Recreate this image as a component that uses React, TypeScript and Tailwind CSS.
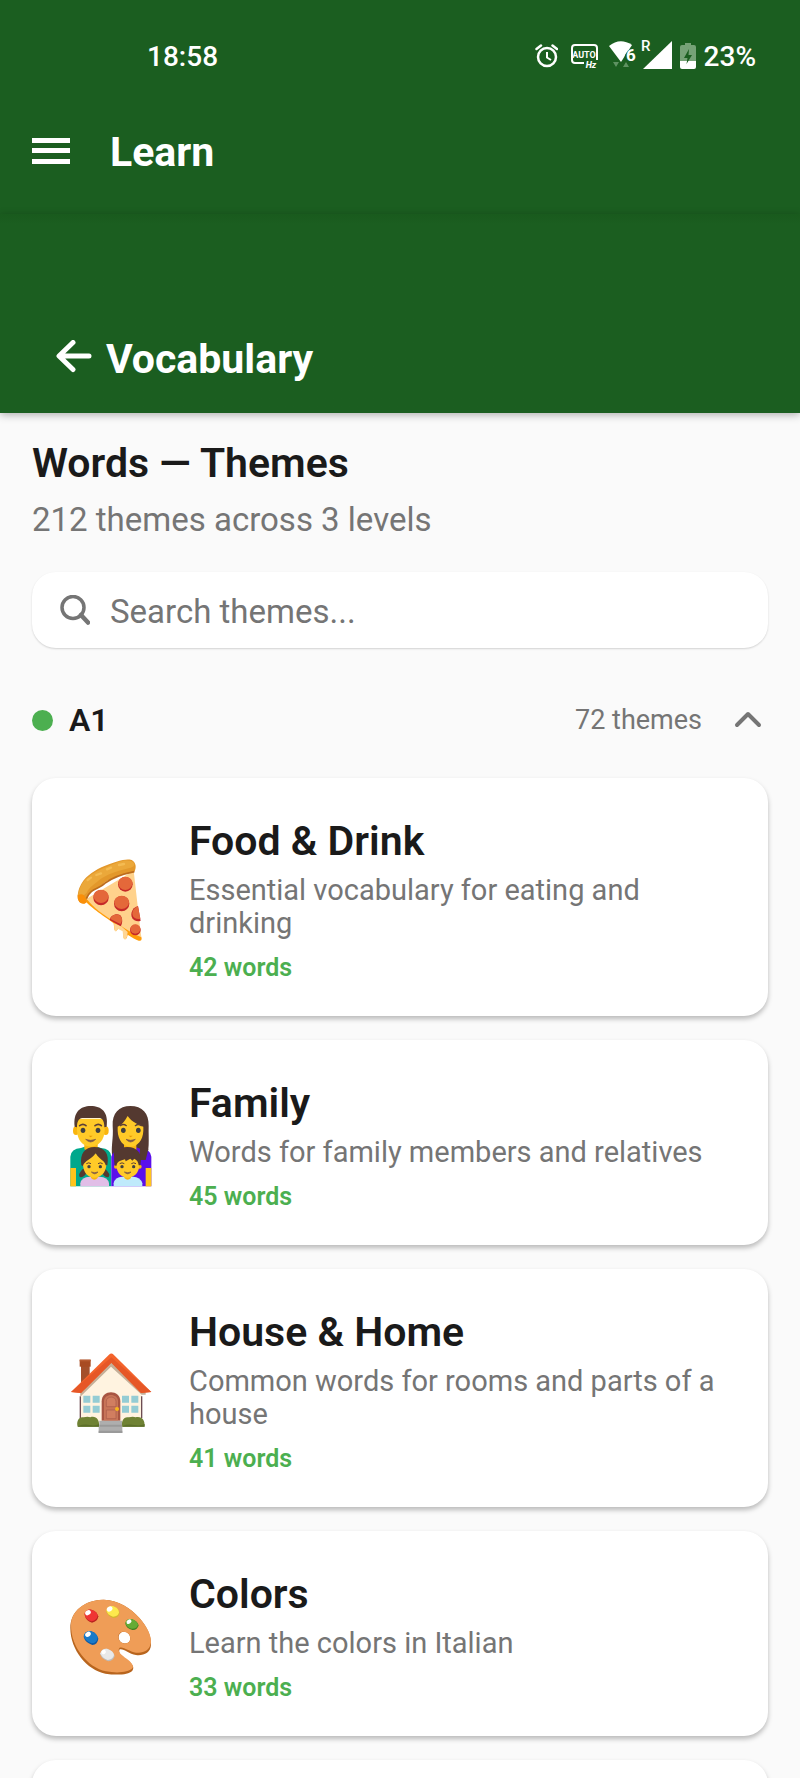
import React from 'react';

type Theme = {
  title: string;
  description: string;
  words: number;
  icon: React.ReactNode;
};

const PizzaIcon = () => (
  <svg viewBox="44 33 276 276" className="size-[92px]" aria-hidden="true">
    <path d="M103 180 C160 228 225 268 270 298 Q276 300 272 285 L250 92 Z" fill="#FFD28C" />
    <path d="M100 178 C112 196 160 228 190 250 L192 268 Q196 278 202 268 L203 262 L218 272 L220 294 Q225 302 230 292 L232 284 C246 292 256 299 265 302 Q276 305 273 292 C240 278 220 262 188 243 C160 224 128 203 112 180 Z" fill="#FF9D0A" />
    <path d="M191 250 L192 270 Q197 280 202 266 L217 274 L219 294 Q225 304 230 290 L232 276 L212 258 Z" fill="#FFD694" />
    <path d="M82 165 C80 184 92 194 104 190 C112 187 108 178 113 168 C125 146 150 145 160 130 C186 112 220 100 251 97 C260 84 257 66 244 60 C222 55 196 66 176 73 C144 84 119 99 100 121 Q84 143 82 165 Z" fill="#E3982B" />
    <path d="M84 165 C86 146 95 127 111 113 C136 91 178 78 204 66 C222 60 242 59 251 69 C255 82 241 83 226 87 C196 94 167 104 144 122 C130 134 119 139 109 158 Q100 170 84 165 Z" fill="#EBA83A" />
    <path d="M82 166 Q81 192 102 191 Q112 188 106 176 Q100 156 82 166 Z" fill="#FA8F08" />
    <path d="M108 176 C122 142 147 148 163 130 C187 112 222 101 252 95" fill="none" stroke="#BD6C1C" strokeWidth="5" />
    <path d="M112 120 l10 -7 M138 105 l14 -5 M170 88 l12 -5 M206 75 l15 -3" stroke="#F4BB52" strokeWidth="7" strokeLinecap="round" />
    <g fill="#C62828">
      <circle cx="225" cy="133" r="22" />
      <circle cx="152" cy="173" r="23" />
      <circle cx="214" cy="191" r="23" />
      <circle cx="255" cy="270" r="16" />
      <path d="M178 240 C180 226 198 219 209 225 C217 232 218 248 211 259 Z" />
      <path d="M263 198 C243 203 236 229 251 240 Q262 246 271 242 Z" />
    </g>
    <g fill="#E4683A">
      <ellipse cx="225" cy="130" rx="21" ry="20" />
      <ellipse cx="152" cy="169" rx="22" ry="20" />
      <ellipse cx="214" cy="187" rx="22" ry="20" />
      <ellipse cx="255" cy="267" rx="15" ry="14" />
      <path d="M180 237 C182 226 198 220 208 226 C217 233 217 244 210 252 Z" />
      <path d="M263 199 C246 205 240 225 253 234 Q262 239 270 236 Z" />
    </g>
  </svg>
);

const FamilyIcon = () => (
  <svg viewBox="44 33 276 276" className="size-[92px]" aria-hidden="true">
    {/* father */}
    <path d="M60 301 V212 Q62 188 92 186 L120 176 L152 186 Q181 188 183 212 V301 Z" fill="#00A88C" />
    <path d="M60 246 H77 V301 H60 Z" fill="#FFC41C" />
    <path d="M102 160 H142 V190 Q122 202 102 190 Z" fill="#F9B50F" />
    <ellipse cx="77" cy="134" rx="9" ry="13" fill="#F9B50F" />
    <ellipse cx="166" cy="134" rx="9" ry="13" fill="#F9B50F" />
    <path d="M80 98 H163 V132 C163 162 144 182 121 182 C98 182 80 162 80 132 Z" fill="#FFCA28" />
    <path d="M73 122 C68 78 90 60 121 60 C154 60 175 78 169 122 L162 124 C162 108 158 98 148 96 H96 C84 98 80 108 80 124 Z" fill="#543930" />
    <ellipse cx="98" cy="133" rx="7" ry="8" fill="#404040" />
    <ellipse cx="143" cy="133" rx="7" ry="8" fill="#404040" />
    <path d="M88 119 Q98 111 107 119 M134 119 Q144 111 153 119" fill="none" stroke="#5D4037" strokeWidth="5" strokeLinecap="round" />
    <path d="M115 149 H127 L121 154 Z" fill="#E59600" />
    <path d="M106 160 Q121 166 136 160 Q121 176 106 160 Z" fill="#795548" stroke="#795548" strokeWidth="2" />

    {/* mother */}
    <path d="M186 212 C181 180 190 160 187 120 C185 82 206 60 240 60 C276 60 296 82 295 120 C294 160 300 200 283 220 H196 Z" fill="#543930" />
    <path d="M183 301 V212 Q190 190 210 188 L240 178 L270 188 Q301 188 303 212 V301 Z" fill="#5B0FEB" />
    <path d="M286 246 H303 V301 H286 Z" fill="#FFC41C" />
    <path d="M187 185 L210 178 L208 224 H194 Z M270 180 L294 190 L286 222 H266 Z" fill="#543930" />
    <path d="M221 160 H258 V192 Q239 202 221 190 Z" fill="#F9B50F" />
    <path d="M202 122 C218 116 226 100 232 90 C244 108 264 116 279 122 V134 C278 164 260 182 240 182 C220 182 203 163 202 134 Z" fill="#FFCA28" />
    <ellipse cx="219" cy="133" rx="7" ry="8" fill="#404040" />
    <ellipse cx="264" cy="133" rx="7" ry="8" fill="#404040" />
    <path d="M210 119 Q219 112 228 119 M255 119 Q264 112 273 119" fill="none" stroke="#5D4037" strokeWidth="4" strokeLinecap="round" />
    <path d="M235 149 H247 L241 154 Z" fill="#E59600" />
    <path d="M227 160 Q241 166 255 160 Q241 176 227 160 Z" fill="#795548" stroke="#795548" strokeWidth="2" />

    {/* daughter */}
    <path d="M98 248 Q82 264 88 273 Q104 276 110 256 Z M164 248 Q182 264 175 273 Q160 276 154 256 Z" fill="#543930" />
    <path d="M90 301 V292 Q94 272 118 272 H148 Q172 272 176 292 V301 Z" fill="#E1BEE7" />
    <path d="M122 262 H142 V276 Q132 286 122 276 Z" fill="#F9B50F" />
    <path d="M98 225 C100 194 166 194 168 225 V238 C166 262 150 275 132 275 C114 275 100 262 98 238 Z" fill="#FFCA28" />
    <path d="M93 238 C88 202 104 183 132 183 C162 183 178 202 171 238 H166 C164 224 150 224 136 202 C122 222 102 224 98 240 Z" fill="#543930" />
    <circle cx="116" cy="242" r="5" fill="#404040" />
    <circle cx="150" cy="242" r="5" fill="#404040" />
    <path d="M108 233 Q115 228 122 233 M143 233 Q150 228 157 233" fill="none" stroke="#5D4037" strokeWidth="3" />
    <path d="M123 258 Q133 262 143 258 Q133 269 123 258 Z" fill="#795548" stroke="#795548" strokeWidth="2" />

    {/* son */}
    <path d="M190 301 V292 Q194 272 216 272 H248 Q270 272 276 292 V301 Z" fill="#BFEAFB" />
    <path d="M222 262 H242 V276 Q232 286 222 276 Z" fill="#F9B50F" />
    <circle cx="197" cy="242" r="6" fill="#F9B50F" />
    <circle cx="268" cy="242" r="6" fill="#F9B50F" />
    <path d="M198 214 H267 V238 C266 262 250 275 232 275 C214 275 199 262 198 238 Z" fill="#FFCA28" />
    <path d="M193 238 C186 202 203 183 231 183 C262 183 277 202 270 238 L265 238 C264 228 260 222 252 218 L246 224 L240 218 L226 226 L224 220 C210 224 201 226 198 240 Z" fill="#543930" />
    <circle cx="215" cy="242" r="5" fill="#404040" />
    <circle cx="250" cy="242" r="5" fill="#404040" />
    <path d="M208 233 Q215 228 222 233 M243 233 Q250 228 257 233" fill="none" stroke="#5D4037" strokeWidth="3" />
    <path d="M222 258 Q232 262 242 258 Q232 269 222 258 Z" fill="#795548" stroke="#795548" strokeWidth="2" />
  </svg>
);

const HouseIcon = () => (
  <svg viewBox="44 34 276 276" className="size-[92px]" aria-hidden="true">
    <path d="M92 104 H118 V140 L92 164 Z" fill="#A5502B" />
    <path d="M88 87 H121 V108 H88 Z" fill="#A84B22" />
    <path d="M88 87 H121 V92 H88 Z" fill="#B75A30" />
    <path d="M90 180 L182 92 L274 180 V274 H90 Z" fill="#FFF3E0" />
    <path d="M90 197 V262 M274 197 V262" stroke="#6D4C52" strokeWidth="4" />
    <path d="M78 185 L182 82 L286 185 V192 H274 L182 108 L90 198 V185 Z" fill="#C5AF98" />
    <path d="M62 184 L176 72 Q183 65 190 72 L303 184 L272 187 L183 96 L92 187 Z" fill="#F4642C" />
    <path d="M62 184 L183 80 L303 184 L272 187 L183 96 L92 187 Z" fill="#E65727" />
    <path d="M154 270 V212 C154 176 210 176 210 212 V270 Z" fill="#A85542" />
    <path d="M161 270 V212 C161 187 203 187 203 212 V270 Z" fill="#C87558" />
    <path d="M168 228 V212 C168 195 197 195 197 212 V228 Z M168 238 H197 V264 H168 Z" fill="#D17E60" stroke="#A85A48" strokeWidth="2" />
    <circle cx="200" cy="235" r="6" fill="#F6B51C" />
    <g fill="#94CCD4">
      <path d="M99 195 H120 V216 H99 Z M127 195 H148 V216 H127 Z M99 225 H120 V246 H99 Z M127 225 H148 V246 H127 Z" />
      <path d="M215 195 H236 V216 H215 Z M243 195 H264 V216 H243 Z M215 225 H236 V246 H215 Z M243 225 H264 V246 H243 Z" />
    </g>
    <path d="M82 288 C77 272 86 256 100 260 Q112 256 120 260 C136 254 149 268 146 288 Z" fill="#6F8234" />
    <path d="M216 288 C212 272 220 256 236 260 Q248 256 256 260 C273 255 286 269 282 288 Z" fill="#6F8234" />
    <path d="M84 286 Q102 279 118 283 T146 280 V288 H82 Z M216 286 Q234 279 252 283 T283 280 V288 H216 Z" fill="#5D702A" />
    <path d="M147 270 H215 V288 H216 V307 H145 V288 H147 Z" fill="#AEAEAE" />
    <path d="M147 282 H215 V288 H147 Z M145 300 H216 V307 H145 Z" fill="#9A9A9A" />
  </svg>
);

const PaletteIcon = () => (
  <svg viewBox="44 22 276 276" className="size-[92px]" aria-hidden="true">
    <path
      fillRule="evenodd"
      d="M60 142 C60 90 105 57 160 57 C205 58 242 83 268 113 C290 138 303 166 302 192 C301 216 279 226 257 223 C235 220 221 203 208 206 C202 217 215 228 231 239 C245 249 254 260 246 270 C234 283 198 284 165 279 C110 268 60 208 60 142 Z M205 169 C205 182 216 190 228 188 C243 184 242 168 235 160 C224 148 206 154 205 169 Z"
      fill="#B8651E"
    />
    <path
      fillRule="evenodd"
      d="M62 132 C64 86 110 57 160 57 C205 58 242 83 268 113 C290 138 303 164 302 185 C299 209 279 219 257 216 C235 213 218 196 207 202 C200 213 214 224 229 234 C243 244 252 256 246 263 C234 276 198 278 167 272 C113 260 61 200 62 132 Z M204 168 C204 182 216 190 228 188 C243 184 242 168 235 160 C224 148 204 152 204 168 Z"
      fill="#EF9D57"
    />
    <path d="M103 102 Q108 85 123 87 Q140 92 144 107 Q142 123 125 126 Q106 120 103 102 Z" fill="#B9221F" />
    <path d="M102 99 Q108 85 123 87 Q140 92 142 105 Q139 119 123 122 Q105 116 102 99 Z" fill="#EF3434" />
    <path d="M168 92 Q171 75 188 76 Q205 82 208 97 Q205 112 188 112 Q170 106 168 92 Z" fill="#D4B52F" />
    <path d="M168 89 Q171 75 188 76 Q205 82 206 95 Q204 108 188 108 Q170 103 168 89 Z" fill="#FDE84D" />
    <path d="M225 129 Q228 113 244 115 Q261 121 265 134 Q261 149 246 148 Q228 143 225 129 Z" fill="#427D20" />
    <path d="M225 126 Q228 113 244 115 Q261 121 263 132 Q260 145 244 144 Q228 140 225 126 Z" fill="#65AB35" />
    <path d="M100 169 Q103 151 121 151 Q140 158 144 174 Q142 191 126 193 Q105 186 100 169 Z" fill="#0C58A4" />
    <path d="M100 166 Q103 151 121 151 Q140 158 142 171 Q140 187 124 188 Q104 182 100 166 Z" fill="#197AC7" />
    <path d="M150 221 Q153 203 170 204 Q189 210 193 226 Q189 241 174 242 Q154 236 150 221 Z" fill="#BDBDBD" />
    <path d="M150 218 Q153 203 170 204 Q189 210 191 223 Q188 237 172 238 Q154 232 150 218 Z" fill="#E9E9E9" />
    <g fill="#FFFFFF">
      <ellipse cx="113" cy="96" rx="9" ry="7" transform="rotate(-35 113 96)" />
      <ellipse cx="178" cy="85" rx="9" ry="7" transform="rotate(-35 178 85)" />
      <ellipse cx="236" cy="123" rx="8" ry="6" transform="rotate(-35 236 123)" />
      <ellipse cx="113" cy="161" rx="9" ry="7" transform="rotate(-35 113 161)" />
      <ellipse cx="160" cy="214" rx="7" ry="6" transform="rotate(-35 160 214)" />
    </g>
  </svg>
);

const themes: Theme[] = [
  { title: 'Food & Drink', description: 'Essential vocabulary for eating and drinking', words: 42, icon: <PizzaIcon /> },
  { title: 'Family', description: 'Words for family members and relatives', words: 45, icon: <FamilyIcon /> },
  { title: 'House & Home', description: 'Common words for rooms and parts of a house', words: 41, icon: <HouseIcon /> },
  { title: 'Colors', description: 'Learn the colors in Italian', words: 33, icon: <PaletteIcon /> },
];

const StatusIcons = () => (
  <div className="flex items-center" aria-hidden="true">
    <svg viewBox="0 0 24 24" className="size-6" fill="none" stroke="#fff" strokeWidth="2.500">
      <circle cx="13" cy="13" r="9" />
      <path d="M13 8 V13.500 L17 16" strokeWidth="2" />
      <path d="M2.500 5 L7 1.500 M23 5 L18.500 1.500" strokeLinecap="round" />
    </svg>
    <svg viewBox="0 0 28 28" className="ml-3 size-7">
      <path d="M14 21 H5 Q2 21 2 18 V6 Q2 3 5 3 H24 Q27 3 27 6 V18" fill="none" stroke="#fff" strokeWidth="2" />
      <text x="14" y="16" textAnchor="middle" fontSize="9" fontWeight="700" fill="#fff">AUTO</text>
      <text x="21" y="26" textAnchor="middle" fontSize="9" fontWeight="800" fontStyle="italic" fill="#fff">Hz</text>
    </svg>
    <svg viewBox="0 0 28 36" className="ml-2.5 h-9 w-7">
      <path d="M1 8 Q12 -1 24 7 L13 24 Z" fill="#fff" />
      <path d="M28 28 H15 L17 17 Q20 11 24 11 H28 Z" fill="#1b5e20" />
      <text x="23" y="23" textAnchor="middle" fontSize="17" fontWeight="700" fill="#fff">6</text>
      <path d="M5 24 H11 L8 29 Z M15 29 H21 L18 24 Z" fill="#5f9262" />
    </svg>
    <svg viewBox="0 0 32 40" className="ml-1 h-10 w-8">
      <path d="M32 5 V33 H3 Z" fill="#fff" />
      <text x="1" y="15" fontSize="15" fill="#fff">R</text>
    </svg>
    <svg viewBox="0 0 16 28" className="ml-2 h-7 w-4">
      <path d="M5 1 H11 V3 H14 Q16 3 16 5 V19 H0 V5 Q0 3 2 3 H5 Z" fill="#76A277" />
      <path d="M0 19 H16 V25 Q16 27 14 27 H2 Q0 27 0 25 Z" fill="#fff" />
      <path d="M9 7 L4 16 H7.500 L6.500 22 L12 13 H8.500 Z" fill="#1B5E20" />
    </svg>
  </div>
);

function ThemeCard({ theme }: { theme: Theme }) {
  return (
    <li className="flex items-center gap-8 rounded-[24px] bg-white px-[33px] py-8 shadow-[0_3px_5px_rgba(0,0,0,0.26)]">
      <div className="shrink-0">{theme.icon}</div>
      <div className="min-w-0 flex-1">
        <h3 className="text-[41px] leading-[62px] font-semibold text-[#1a1a1a]">{theme.title}</h3>
        <p className="mt-0.5 text-[29px] leading-[33px] text-[#757575]">{theme.description}</p>
        <p className="mt-3 text-[25px] leading-[32px] font-semibold text-[#4caf50]">{theme.words} words</p>
      </div>
    </li>
  );
}

export default function App() {
  const [query, setQuery] = React.useState('');
  const [open, setOpen] = React.useState(true);

  const visible = themes.filter((t) => t.title.toLowerCase().includes(query.toLowerCase()));

  return (
    <div className="h-screen overflow-hidden bg-[#fafafa] font-['Roboto',sans-serif]">
      <header className="bg-[#1b5e20] text-white">
        <div className="pt-6">
          <div className="flex h-16 items-center justify-between pr-11 pl-[147px] text-[28px] font-medium">
            <span className="pt-0.5">18:58</span>
            <div className="flex items-center gap-2">
              <StatusIcons />
              <span className="pt-0.5">23%</span>
            </div>
          </div>
        </div>
        <div className="flex h-[126px] items-center gap-10 px-8">
          <button type="button" aria-label="Open menu">
            <svg viewBox="0 0 38 26" className="h-[26px] w-[38px]" fill="#fff">
              <path d="M0 0 H38 V5 H0 Z M0 10 H38 V15 H0 Z M0 21 H38 V26 H0 Z" />
            </svg>
          </button>
          <h1 className="pt-1 text-[41px] font-bold">Learn</h1>
        </div>
      </header>

      <div className="bg-linear-to-b from-[#195a1d] to-[#1b5e20] to-5% pt-[89px] text-white shadow-[0_2px_8px_rgba(0,0,0,0.3)]">
        <div className="flex h-[110px] items-center gap-[14px] px-14">
          <button type="button" aria-label="Back">
            <svg viewBox="0 0 36 36" className="size-9" fill="none" stroke="#fff" strokeWidth="5" strokeLinecap="round" strokeLinejoin="round">
              <path d="M17 2.500 L3 16 L17 29.500 M4 16 H33" />
            </svg>
          </button>
          <h2 className="pt-1 text-[41px] font-bold">Vocabulary</h2>
        </div>
      </div>

      <main className="px-8 pt-5">
        <h2 className="text-[41px] leading-[60px] font-semibold text-[#1a1a1a]">Words — Themes</h2>
        <p className="mt-1 text-[33px] leading-[46px] text-[#757575]">212 themes across 3 levels</p>

        <label className="mt-[29px] flex h-[76px] items-center gap-5 rounded-[24px] bg-white px-7 shadow-[0_1px_2px_rgba(0,0,0,0.16)]">
          <svg viewBox="0 0 30 30" className="size-[30px] shrink-0" fill="none" stroke="#757575" strokeWidth="3.500" aria-hidden="true">
            <circle cx="13" cy="12.500" r="11" />
            <path d="M21 20 L28 27.500" strokeWidth="4.500" strokeLinecap="round" />
          </svg>
          <input
            type="text"
            value={query}
            onChange={(e) => setQuery(e.target.value)}
            placeholder="Search themes..."
            aria-label="Search themes"
            className="min-w-0 flex-1 bg-transparent pt-1 text-[33px] leading-[44px] text-[#1a1a1a] outline-none placeholder:text-[#757575]"
          />
        </label>

        <button
          type="button"
          aria-expanded={open}
          onClick={() => setOpen(!open)}
          className="mt-4 mb-0.5 flex h-28 w-full items-center pr-1.5"
        >
          <span className="size-[21px] rounded-full bg-[#4caf50]" />
          <span className="ml-4 text-[32px] font-semibold text-[#1a1a1a]">A1</span>
          <span className="ml-auto text-[27px] text-[#757575]">72 themes</span>
          <svg viewBox="0 0 28 18" className="ml-8 h-[18px] w-7" fill="none" stroke="#757575" strokeWidth="4" strokeLinecap="round" strokeLinejoin="round" aria-hidden="true">
            <path d="M3 14 L14 3 L25 14" />
          </svg>
        </button>

        {open && (
          <ul className="space-y-6">
            {visible.map((theme) => (
              <ThemeCard key={theme.title} theme={theme} />
            ))}
            <li className="h-[205px] rounded-[24px] bg-white shadow-[0_3px_5px_rgba(0,0,0,0.26)]" aria-hidden="true" />
          </ul>
        )}
      </main>
    </div>
  );
}
